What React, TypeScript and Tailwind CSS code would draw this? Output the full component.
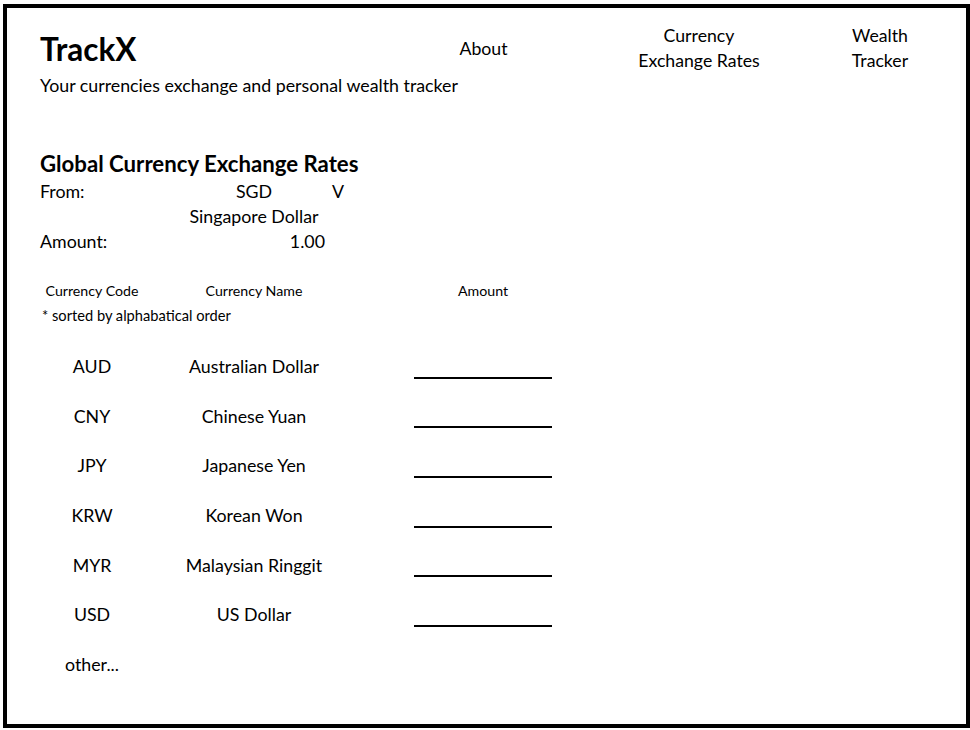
const rates = [
  { code: "AUD", name: "Australian Dollar" },
  { code: "CNY", name: "Chinese Yuan" },
  { code: "JPY", name: "Japanese Yen" },
  { code: "KRW", name: "Korean Won" },
  { code: "MYR", name: "Malaysian Ringgit" },
  { code: "USD", name: "US Dollar" },
];

export default function App() {
  return (
    <div className="w-[970px] h-[730px] bg-white text-black font-['Lato',sans-serif] pt-[4px] pl-[3px]">
      <div className="w-[967px] h-[724px] border-4 border-black pl-[33px]">
        {/* header */}
        <div className="flex items-start">
          <div className="w-[383px] pt-[21px]">
            <div className="text-[31.5px] leading-[40px] font-bold">TrackX</div>
            <div className="mt-[4px] text-[17.8px] leading-[24px] whitespace-nowrap">
              Your currencies exchange and personal wealth tracker
            </div>
          </div>
          <nav className="flex items-start text-[17.7px] leading-[25px] text-center">
            <a className="block w-[121px] mt-[28px]">About</a>
            <a className="block w-[160px] ml-[75px] mt-[15px]">
              Currency
              <br />
              Exchange Rates
            </a>
            <a className="block w-[100px] ml-[51px] mt-[15px]">
              Wealth
              <br />
              Tracker
            </a>
          </nav>
        </div>

        {/* converter */}
        <h2 className="mt-[53px] text-[22.2px] leading-[28px] font-bold">
          Global Currency Exchange Rates
        </h2>
        <div className="mt-[1px] grid grid-cols-[139px_150px_40px] text-[17.8px] leading-[25px]">
          <div>From:</div>
          <div className="text-center">SGD</div>
          <div className="pl-[3px]">V</div>
          <div />
          <div className="text-center whitespace-nowrap">Singapore Dollar</div>
          <div />
          <div>Amount:</div>
          <div className="text-right pr-[4px]">1.00</div>
          <div />
        </div>

        {/* table */}
        <div className="mt-[26.5px] grid grid-cols-[104px_220px_238px] text-[14.2px] leading-[20px]">
          <div className="text-center">Currency Code</div>
          <div className="text-center">Currency Name</div>
          <div className="text-center">Amount</div>
        </div>
        <div className="mt-[5px] pl-[2px] text-[14.67px] leading-[20px]">* sorted by alphabatical order</div>

        <div className="mt-[16px] text-[17.8px]">
          {rates.map((r) => (
            <div key={r.code} className="grid grid-cols-[104px_220px_238px] h-[49.7px]">
              <div className="flex items-center justify-center">{r.code}</div>
              <div className="flex items-center justify-center whitespace-nowrap">{r.name}</div>
              <div className="flex justify-center pt-[35px]">
                <div className="h-[2px] w-[138px] bg-black" />
              </div>
            </div>
          ))}
          <div className="grid grid-cols-[104px_220px_238px] h-[49.7px]">
            <div className="flex items-center justify-center">other...</div>
          </div>
        </div>
      </div>
    </div>
  );
}
